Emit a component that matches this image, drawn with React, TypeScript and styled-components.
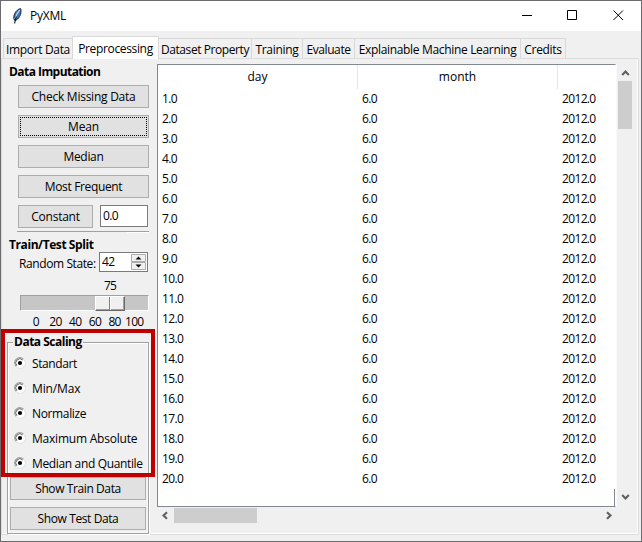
import React from "react";
import styled, { createGlobalStyle, css } from "styled-components";

const Global = createGlobalStyle`
  * { box-sizing: border-box; }
  body { margin: 0; background: #f0f0f0; overflow: hidden; }
`;

const Window = styled.div`
  position: relative;
  width: 642px;
  height: 542px;
  display: flex;
  flex-direction: column;
  background: #f0f0f0;
  border: 1px solid #6c6c6e;
  color: #000;
  font: 12px/16px "Open Sans", "Noto Sans", sans-serif;
  white-space: nowrap;
`;

const TitleBar = styled.header`
  flex: none;
  height: 30px;
  display: flex;
  align-items: center;
  background: #fff;
  padding: 0 16px 0 10px;
`;

const Title = styled.span`
  margin-left: 7px;
  letter-spacing: -0.25px;
  flex: 1;
`;

const WindowControls = styled.svg`
  display: block;
  width: 104px;
  height: 12px;
`;

const Feather = styled.svg`
  display: block;
  width: 12px;
  height: 16px;
`;

const Tabs = styled.nav`
  flex: none;
  display: flex;
  align-items: flex-end;
  height: 27px;
  padding-left: 2px;
`;

const Tab = styled.div<{ $w: number; $ls: number; $selected?: boolean }>`
  width: ${(p) => p.$w}px;
  height: 20px;
  border: 1px solid #d9d9d9;
  border-width: 1px 1px 0 0;
  display: flex;
  align-items: center;
  justify-content: center;
  padding-top: 3px;
  letter-spacing: ${(p) => p.$ls}px;
  &:first-child { border-left-width: 1px; }
  ${(p) =>
    p.$selected &&
    css`
      height: 23px;
      margin: 0 0 -1px -1px;
      z-index: 1;
      background: #fff;
      border-left-width: 1px;
      padding-top: 1px;
    `}
`;

const Pane = styled.main`
  width: 638px;
  height: 477px;
  display: flex;
  border: 1px solid #dcdcdc;
  box-shadow: inset -1px -1px #fff;
  padding: 5px 0 0 5px;
`;

const Sidebar = styled.aside`
  width: 142px;
  margin-right: 8px;
  flex: none;
  display: flex;
  flex-direction: column;
`;

const Heading = styled.div<{ $ls: number }>`
  height: 16px;
  padding-left: 2px;
  font-weight: 700;
  letter-spacing: ${(p) => p.$ls}px;
`;

const ButtonStack = styled.div`
  display: flex;
  flex-direction: column;
  gap: 7px;
  padding: 5px 0 0 11px;
`;

const Button = styled.button<{ $ls?: number; $focused?: boolean; $w?: number }>`
  width: ${(p) => (p.$w ? `${p.$w}px` : "100%")};
  height: 23px;
  flex: none;
  padding: 0;
  border: 1px solid #adadad;
  border-radius: 0;
  background: #e1e1e1;
  color: #000;
  font: inherit;
  letter-spacing: ${(p) => p.$ls ?? 0}px;
  display: flex;
  align-items: center;
  justify-content: center;
  ${(p) => p.$focused && css`outline: 1px dotted #000; outline-offset: -3px;`}
`;

const ConstantRow = styled.div`
  display: flex;
  gap: 7px;
`;

const Entry = styled.div`
  width: 48px;
  height: 22px;
  border: 1px solid #7a7a7a;
  background: #fff;
  padding: 2px 2px;
  letter-spacing: -0.6px;
`;

const Separator = styled.div`
  flex: none;
  height: 2px;
  margin: 3px 0 4px 10px;
  border-top: 1px solid #a0a0a0;
  background: linear-gradient(90deg, transparent 110px, #fff 110px);
`;

const StateRow = styled.div`
  display: flex;
  height: 20px;
  margin: -1px 0 0 12px;
  justify-content: space-between;
  padding-right: 1px;
`;

const StateLabel = styled.span`
  padding-top: 4px;
  letter-spacing: -0.4px;
`;

const Spinbox = styled.div`
  width: 49px;
  height: 20px;
  border: 1px solid #7a7a7a;
  background: #fff;
  display: flex;
  justify-content: space-between;
  padding: 1px 1px 1px 2px;
  line-height: 15px;
  letter-spacing: -0.6px;
`;

const SpinArrows = styled.svg`
  display: block;
  width: 15px;
  height: 16px;
`;

const ScaleValue = styled.div`
  margin: 6px 0 1px 97px;
  height: 16px;
  letter-spacing: -0.8px;
`;

const Track = styled.div`
  flex: none;
  height: 16px;
  margin-left: 13px;
  background: #c6c6c6;
  border: 1px solid;
  border-color: #a0a0a0 #fff #fff #a0a0a0;
  padding-left: 74px;
`;

const Thumb = styled.div`
  width: 30px;
  height: 15px;
  background: #f0f0f0;
  border: 1px solid;
  border-color: #fff #696969 #696969 #fff;
  box-shadow: inset -1px -1px #a0a0a0;
  display: flex;
  justify-content: center;
  &::before {
    content: "";
    width: 2px;
    background: linear-gradient(90deg, #808080 50%, #fff 50%);
  }
`;

const Ticks = styled.div`
  display: grid;
  grid-template-columns: repeat(6, 19.7px);
  justify-items: center;
  height: 16px;
  margin: 3px 0 0 19px;
  letter-spacing: -0.7px;
`;

const Tick = styled.span`
  display: flex;
  justify-content: center;
`;

const ScalingGroup = styled.section`
  margin-top: 12px;
  height: 192px;
  border: 1px solid #a0a0a0;
  box-shadow: inset 1px 1px #fff, inset -1px -1px #f8f8f8, 1px 1px #fff;
  padding: 0 2px;
  display: flex;
  flex-direction: column;
`;

const Legend = styled.div`
  align-self: flex-start;
  height: 16px;
  margin: -9px 0 1px 3px;
  padding: 0 1px;
  background: #f0f0f0;
  font-weight: 700;
  letter-spacing: -0.5px;
`;

const Option = styled.label<{ $ls: number }>`
  display: flex;
  flex: none;
  align-items: center;
  height: 25px;
  padding-left: 4px;
  gap: 6px;
  letter-spacing: ${(p) => p.$ls}px;
  svg { display: block; margin-top: -1px; }
`;

const GroupButtons = styled.div`
  display: flex;
  flex-direction: column;
  gap: 7px;
  margin-top: 1px;
`;

const Viewer = styled.div`
  display: grid;
  grid-template-columns: 461px 14px;
  grid-template-rows: 444px 15px;
`;

const Table = styled.div`
  width: 459px;
  height: 443px;
  overflow: hidden;
  background: #fff;
  border: 1px solid #828790;
  border-right-color: #fff;
  box-shadow: 1px 0 #fafafa;
`;

const HeadRow = styled.div`
  display: grid;
  grid-template-columns: 200px 200px 58px;
  height: 24px;
`;

const HeadCell = styled.div`
  display: flex;
  justify-content: center;
  align-items: center;
  border-right: 1px solid #e5e5e5;
  &:last-child { border: 0; }
`;

const Row = styled.div`
  display: grid;
  grid-template-columns: 200px 200px 57px;
  height: 20px;
  line-height: 20px;
  letter-spacing: -0.65px;
`;

const Cell = styled.span`
  padding-left: 4px;
`;

/* The right border of the tree is only visible below its last row. */
const TableTail = styled.div`
  height: 17px;
  border-right: 1px solid #828790;
`;

const VScroll = styled.div`
  display: flex;
  flex-direction: column;
  justify-content: space-between;
  align-items: center;
  height: 441px;
  padding: 5px 0 4px;
`;

const VThumb = styled.div`
  width: 14px;
  height: 48px;
  margin: 3px 0 auto;
  background: #cdcdcd;
`;

const HScroll = styled.div`
  display: flex;
  align-items: center;
  width: 460px;
  padding: 0 4px;
`;

const HThumb = styled.div`
  width: 83px;
  height: 15px;
  margin: 0 auto 0 4px;
  background: #cdcdcd;
`;

const Highlight = styled.div`
  position: absolute;
  left: 0;
  top: 328px;
  width: 154px;
  height: 148px;
  border: 4px solid #c00000;
`;

const chevrons = {
  up: "M1.2 6 4.5 2.5 7.8 6",
  down: "M1.2 3 4.5 6.5 7.8 3",
  left: "M6 1.2 2.5 4.5 6 7.8",
  right: "M3 1.2 6.5 4.5 3 7.8",
};

function Chevron({ dir }: { dir: keyof typeof chevrons }) {
  return (
    <svg width="9" height="9" viewBox="0 0 9 9" fill="none">
      <path d={chevrons[dir]} stroke="#606060" strokeWidth="2.1" />
    </svg>
  );
}

function RadioMark() {
  return (
    <svg width="12" height="12" viewBox="0 0 12 12" fill="none">
      <circle cx="6" cy="6" r="5" fill="#fff" />
      <path d="M2.2 9.4A5 5 0 0 1 9.4 2.2" stroke="#a0a0a0" strokeWidth="1.2" />
      <path d="M3 8.8A4 4 0 0 1 8.8 3" stroke="#696969" strokeWidth="1" />
      <path d="M10 2.8A5 5 0 0 1 2.8 10" stroke="#e3e3e3" strokeWidth="1" />
      <circle cx="6" cy="6" r="2.1" fill="#000" />
    </svg>
  );
}

const tabs = [
  { label: "Import Data", w: 70, ls: -0.35 },
  { label: "Preprocessing", w: 87, ls: -0.35, selected: true },
  { label: "Dataset Property", w: 93, ls: -0.42 },
  { label: "Training", w: 51, ls: -0.3 },
  { label: "Evaluate", w: 52, ls: -0.4 },
  { label: "Explainable Machine Learning", w: 166, ls: -0.33 },
  { label: "Credits", w: 45, ls: -0.3 },
];

const scalers = [
  { label: "Standart", ls: -0.4 },
  { label: "Min/Max", ls: -0.15 },
  { label: "Normalize", ls: -0.35 },
  { label: "Maximum Absolute", ls: -0.22 },
  { label: "Median and Quantile", ls: -0.35 },
];

const days = Array.from({ length: 20 }, (_, i) => `${i + 1}.0`);

export default function App() {
  return (
    <>
      <Global />
      <Window>
        <TitleBar>
          <Feather viewBox="0 0 12 16">
            <path d="M3.3 12C1.5 8 4.5 2 9.5.5c1.6 3-.4 9.5-4.6 11.8Z" fill="#3f78b5" stroke="#17263a" />
            <path d="M8.8 1.8C6 5 4.6 8 4 11.2" stroke="#b6dcf7" strokeWidth="1.2" fill="none" />
            <path d="M5.4 8.5C4.5 11 4 13 3.6 15.5" stroke="#111" strokeWidth="1.1" fill="none" />
          </Feather>
          <Title>PyXML</Title>
          <WindowControls viewBox="0 0 104 12" fill="none" stroke="#000">
            <path d="M1 5.5h10" />
            <path d="M46.5.5h9v9h-9z" />
            <path d="m92.5.5 9.5 9.5M102 .5 92.5 10" />
          </WindowControls>
        </TitleBar>
        <Tabs>
          {tabs.map((t) => (
            <Tab key={t.label} $w={t.w} $ls={t.ls} $selected={t.selected}>
              {t.label}
            </Tab>
          ))}
        </Tabs>
        <Pane>
          <Sidebar>
            <Heading $ls={-0.55}>Data Imputation</Heading>
            <ButtonStack>
              <Button $ls={-0.25}>Check Missing Data</Button>
              <Button $focused $ls={-0.2}>Mean</Button>
              <Button $ls={-0.3}>Median</Button>
              <Button $ls={-0.35}>Most Frequent</Button>
              <ConstantRow>
                <Button $w={75} $ls={-0.25}>Constant</Button>
                <Entry>0.0</Entry>
              </ConstantRow>
            </ButtonStack>
            <Separator />
            <Heading $ls={-0.42}>Train/Test Split</Heading>
            <StateRow>
              <StateLabel>Random State:</StateLabel>
              <Spinbox>
                42
                <SpinArrows viewBox="0 0 15 16">
                  <path d="M.5.5h14v7H.5zM.5 8.5h14v7H.5z" fill="#f0f0f0" stroke="#adadad" />
                  <path d="M4.5 5.5 7.5 2.5l3 3zM4.5 10.5l3 3 3-3z" fill="#000" />
                </SpinArrows>
              </Spinbox>
            </StateRow>
            <ScaleValue>75</ScaleValue>
            <Track>
              <Thumb />
            </Track>
            <Ticks>
              {[0, 20, 40, 60, 80, 100].map((n) => (
                <Tick key={n}>{n}</Tick>
              ))}
            </Ticks>
            <ScalingGroup>
              <Legend>Data Scaling</Legend>
              {scalers.map((s) => (
                <Option key={s.label} $ls={s.ls}>
                  <RadioMark />
                  {s.label}
                </Option>
              ))}
              <GroupButtons>
                <Button $ls={-0.4}>Show Train Data</Button>
                <Button $ls={-0.4}>Show Test Data</Button>
              </GroupButtons>
            </ScalingGroup>
          </Sidebar>
          <Viewer>
            <Table>
              <HeadRow>
                <HeadCell>day</HeadCell>
                <HeadCell>month</HeadCell>
                <HeadCell />
              </HeadRow>
              {days.map((d) => (
                <Row key={d}>
                  <Cell>{d}</Cell>
                  <Cell>6.0</Cell>
                  <Cell>2012.0</Cell>
                </Row>
              ))}
              <TableTail />
            </Table>
            <VScroll>
              <Chevron dir="up" />
              <VThumb />
              <Chevron dir="down" />
            </VScroll>
            <HScroll>
              <Chevron dir="left" />
              <HThumb />
              <Chevron dir="right" />
            </HScroll>
          </Viewer>
        </Pane>
        <Highlight />
      </Window>
    </>
  );
}
